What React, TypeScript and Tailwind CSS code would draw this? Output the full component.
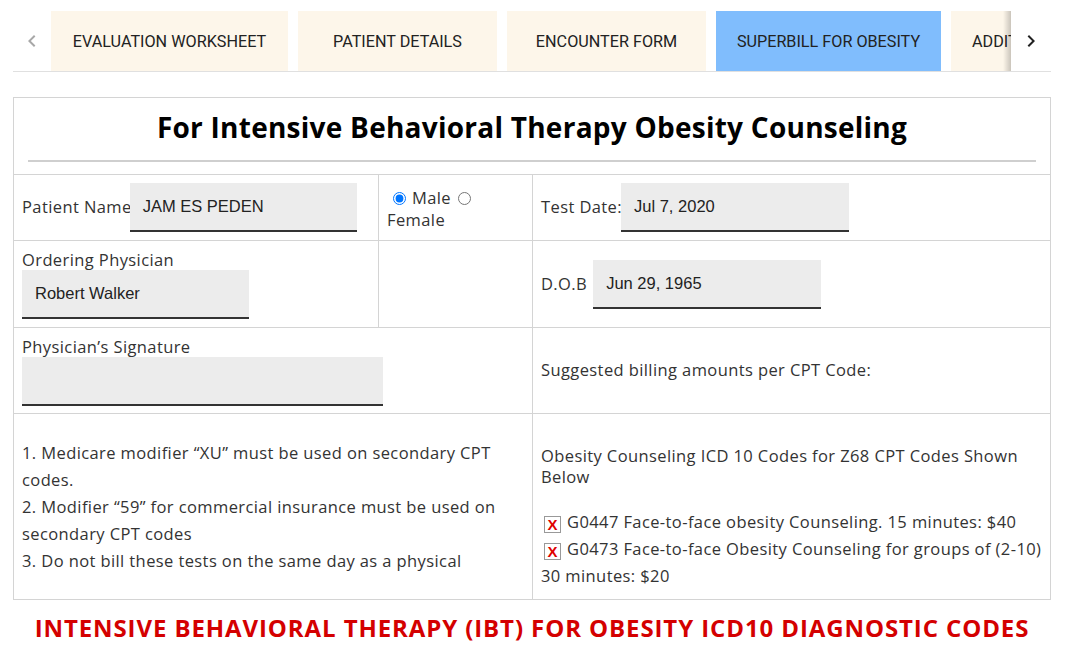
import React from 'react'

const tabs = [
  { label: 'EVALUATION WORKSHEET', w: 'w-[237px]', active: false },
  { label: 'PATIENT DETAILS', w: 'w-[199px]', active: false },
  { label: 'ENCOUNTER FORM', w: 'w-[199px]', active: false },
  { label: 'SUPERBILL FOR OBESITY', w: 'w-[225px]', active: true },
]

function Chevron({ dir, className }: { dir: 'left' | 'right'; className?: string }) {
  return (
    <svg viewBox="0 0 24 24" className={className} fill="currentColor">
      {dir === 'left' ? (
        <path d="M15.41 7.41 14 6l-6 6 6 6 1.41-1.41L10.83 12z" />
      ) : (
        <path d="M8.59 16.59 10 18l6-6-6-6-1.41 1.41L13.17 12z" />
      )}
    </svg>
  )
}

function Field({ value, w }: { value?: string; w: string }) {
  return (
    <div
      className={`${w} shrink-0 h-[49px] bg-[#ececec] border-b-2 border-[#333] flex items-center pl-[13px] text-[16.5px] tracking-normal text-[#222]`}
      style={{ fontFamily: '"Liberation Sans", Arial, sans-serif' }}
    >
      {value}
    </div>
  )
}

function XBox() {
  return (
    <span
      className="inline-flex items-center justify-center w-[17px] h-[17px] border border-[#999] bg-white text-[#e00000] font-bold text-[15px] leading-none tracking-normal mr-[6px] ml-[3px] align-[-2px]"
      style={{ fontFamily: '"Liberation Sans", Arial, sans-serif' }}
    >
      X
    </span>
  )
}

export default function App() {
  return (
    <div className="min-h-screen bg-white text-[#333]" style={{ fontFamily: '"Open Sans", Lato, sans-serif' }}>
      <div className="pt-[11px] pl-[13px] w-[1051px]">
        {/* Tabs */}
        <div className="flex h-[61px] border-b border-[#e0e0e0]">
          <div className="w-[38px] flex items-center justify-center">
            <Chevron dir="left" className="w-[24px] h-[24px] text-[#a8a8a8]" />
          </div>
          <div className="relative flex-1 overflow-hidden">
            <div className="flex gap-[10px] h-[60px]">
              {tabs.map((t) => (
                <div
                  key={t.label}
                  className={`${t.w} shrink-0 h-full flex items-center justify-center pt-[2px] text-[16.2px] text-[#222] whitespace-nowrap ${
                    t.active ? 'bg-[#80bdfd]' : 'bg-[#fdf6ea]'
                  }`}
                  style={{ fontFamily: 'Roboto, sans-serif' }}
                >
                  {t.label}
                </div>
              ))}
              <div
                className="w-[200px] shrink-0 h-full flex items-center pt-[2px] pl-[21px] bg-[#fdf6ea] text-[16.2px] text-[#222] whitespace-nowrap"
                style={{ fontFamily: 'Roboto, sans-serif' }}
              >
                ADDITIONAL NOTES
              </div>
            </div>
            <div className="absolute right-0 top-0 h-[60px] w-[8px] bg-gradient-to-r from-transparent to-black/20" />
          </div>
          <div className="w-[40px] flex items-center justify-center">
            <Chevron dir="right" className="w-[24px] h-[24px] text-[#222]" />
          </div>
        </div>

        {/* Main form */}
        <div className="mt-[25px] border border-[#d4d4d4]">
          <div className="h-[77px] border-b border-[#d4d4d4] px-[14px] pt-[12px]">
            <h1 className="text-center text-[28px] leading-[34px] font-bold text-black tracking-[0.25px]">
              For Intensive Behavioral Therapy Obesity Counseling
            </h1>
            <div className="mt-[16px] border-t-2 border-[#cfcfcf]" />
          </div>

          <div className="text-[16.5px] tracking-[0.4px]">
            {/* Row 1 */}
            <div className="flex h-[66px] border-b border-[#d4d4d4]">
              <div className="w-[365px] border-r border-[#d4d4d4] flex items-center px-[8px]">
                <span className="-mr-[2px] whitespace-nowrap">Patient Name</span>
                <Field value="JAM ES PEDEN" w="w-[227px]" />
              </div>
              <div className="w-[154px] border-r border-[#d4d4d4] px-[8px] pt-[12px] leading-[22px]">
                <div className="flex items-center">
                  <input type="radio" name="g" defaultChecked className="w-[13px] h-[13px] ml-[6px] mr-[6px] accent-[#0075ff]" />
                  <span>Male</span>
                  <input type="radio" name="g" className="w-[13px] h-[13px] ml-[7px] accent-[#0075ff]" />
                </div>
                <div>Female</div>
              </div>
              <div className="flex-1 flex items-center px-[8px]">
                <span className="-mr-[1px] whitespace-nowrap">Test Date:</span>
                <Field value="Jul 7, 2020" w="w-[228px]" />
              </div>
            </div>

            {/* Row 2 */}
            <div className="flex h-[87px] border-b border-[#d4d4d4]">
              <div className="w-[365px] border-r border-[#d4d4d4] flex flex-col justify-center px-[8px]">
                <div className="leading-[21px]">Ordering Physician</div>
                <Field value="Robert Walker" w="w-[227px]" />
              </div>
              <div className="w-[154px] border-r border-[#d4d4d4]" />
              <div className="flex-1 flex items-center px-[8px]">
                <span className="mr-[6px]">D.O.B</span>
                <Field value="Jun 29, 1965" w="w-[228px]" />
              </div>
            </div>

            {/* Row 3 */}
            <div className="flex h-[86px] border-b border-[#d4d4d4]">
              <div className="w-[519px] border-r border-[#d4d4d4] flex flex-col justify-center px-[8px]">
                <div className="leading-[21px]">Physician’s Signature</div>
                <Field w="w-[361px]" />
              </div>
              <div className="flex-1 flex items-center px-[8px]">Suggested billing amounts per CPT Code:</div>
            </div>

            {/* Row 4 */}
            <div className="flex h-[185px] whitespace-nowrap">
              <div className="w-[519px] border-r border-[#d4d4d4] flex flex-col justify-center px-[8px] leading-[27px]">
                <div>1. Medicare modifier “XU” must be used on secondary CPT</div>
                <div>codes.</div>
                <div>2. Modifier “59” for commercial insurance must be used on</div>
                <div>secondary CPT codes</div>
                <div>3. Do not bill these tests on the same day as a physical</div>
              </div>
              <div className="flex-1 px-[8px] pt-[31px]">
                <div className="leading-[21px]">
                  Obesity Counseling ICD 10 Codes for Z68 CPT Codes Shown
                  <br />
                  Below
                </div>
                <div className="mt-[21px] leading-[27px]">
                  <div>
                    <XBox />G0447 Face-to-face obesity Counseling. 15 minutes: $40
                  </div>
                  <div>
                    <XBox />G0473 Face-to-face Obesity Counseling for groups of (2-10)
                  </div>
                  <div>30 minutes: $20</div>
                </div>
              </div>
            </div>
          </div>
        </div>

        <h2 className="mt-[13px] text-center text-[24px] font-bold text-[#d40000] leading-[30px] tracking-[0.9px]">
          INTENSIVE BEHAVIORAL THERAPY (IBT) FOR OBESITY ICD10 DIAGNOSTIC CODES
        </h2>
      </div>
    </div>
  )
}
